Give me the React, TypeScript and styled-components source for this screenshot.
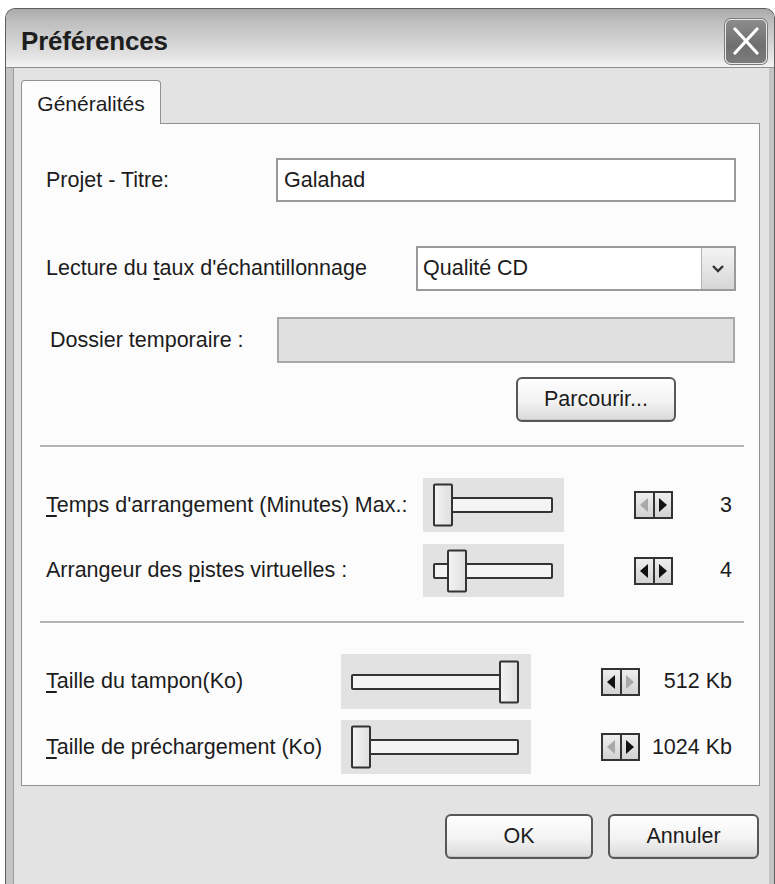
import styled, { createGlobalStyle } from "styled-components";

const GlobalStyle = createGlobalStyle`
  html, body {
    margin: 0;
    padding: 0;
    background: #ffffff;
    height: 884px;
    overflow: hidden;
  }
  body {
    font-family: "Liberation Sans", Arial, sans-serif;
    color: #1c1c1c;
  }
`;

const Page = styled.div`
  padding: 8px 0 0 5px;
`;

const Window = styled.div`
  width: 770px;
  box-sizing: border-box;
  border: 1px solid #5e5e5e;
  border-bottom: none;
  border-radius: 10px 10px 0 0;
  background: #c4c4c4;
  overflow: hidden;
`;

const TitleBar = styled.div`
  height: 59px;
  box-sizing: border-box;
  padding: 6px 7px 0 15px;
  display: flex;
  align-items: center;
  justify-content: space-between;
  background: linear-gradient(#a9a9a9 0%, #bdbdbd 20%, #d2d2d2 55%, #e6e6e6 85%, #f3f3f3 100%);
  border-bottom: 1px solid #8e8e8e;
`;

const Title = styled.h1`
  margin: 0;
  font-size: 26px;
  font-weight: 700;
  color: #1e1e1e;
  letter-spacing: -0.2px;
`;

const CloseButton = styled.button`
  width: 42px;
  height: 45px;
  padding: 0;
  border: 1px solid #e8e8e8;
  border-radius: 6px;
  background: linear-gradient(#8c8c8c, #6f6f6f 60%, #7c7c7c);
  box-shadow: 0 0 0 1px #7a7a7a;
  display: flex;
  align-items: center;
  justify-content: center;
`;

const Frame = styled.div`
  padding: 0 5px 0 7px;
`;

const Body = styled.div`
  background: #e3e3e3;
  border-left: 1px solid #9c9c9c;
  padding: 12px 9px 40px 7px;
`;

const TabStrip = styled.div`
  display: flex;
`;

const Tab = styled.div`
  position: relative;
  z-index: 1;
  width: 140px;
  height: 44px;
  box-sizing: border-box;
  margin-bottom: -1px;
  border: 1px solid #919191;
  border-bottom: none;
  border-radius: 4px 4px 0 0;
  background: #fcfcfc;
  display: flex;
  align-items: center;
  justify-content: center;
  font-size: 21px;
  padding-top: 2px;
`;

const Panel = styled.div`
  border: 1px solid #919191;
  background: #fcfcfc;
  padding: 34px 23px 11px 24px;
`;

const FieldRow = styled.div<{ $h: number; $mt?: number }>`
  display: flex;
  align-items: center;
  justify-content: space-between;
  height: ${({ $h }) => $h}px;
  margin-top: ${({ $mt }) => $mt ?? 0}px;
`;

const Label = styled.span<{ $indent?: number }>`
  font-size: 21.5px;
  padding-left: ${({ $indent }) => $indent ?? 0}px;
  white-space: nowrap;
  color: #1c1c1c;
`;

const TextBox = styled.div<{ $w: number; $disabled?: boolean }>`
  width: ${({ $w }) => $w}px;
  height: 100%;
  box-sizing: border-box;
  border: 2px solid ${({ $disabled }) => ($disabled ? "#a9a9a9" : "#9a9a9a")};
  background: ${({ $disabled }) => ($disabled ? "#e0e0e0" : "#ffffff")};
  padding-left: 6px;
  display: flex;
  align-items: center;
  font-size: 21.5px;
  margin-right: ${({ $disabled }) => ($disabled ? 1 : 0)}px;
`;

const Select = styled.div`
  width: 320px;
  height: 100%;
  box-sizing: border-box;
  border: 2px solid #9a9a9a;
  background: #ffffff;
  display: flex;
  align-items: center;
  justify-content: space-between;
  padding-left: 5px;
  font-size: 21.5px;
`;

const DropButton = styled.div`
  width: 33px;
  height: 100%;
  box-sizing: border-box;
  border-left: 1px solid #b4b4b4;
  background: linear-gradient(#f4f4f4, #d6d6d6);
  display: flex;
  align-items: center;
  justify-content: center;
`;

const ButtonRow = styled.div<{ $mt: number; $mr: number }>`
  display: flex;
  justify-content: flex-end;
  gap: 15px;
  margin-top: ${({ $mt }) => $mt}px;
  margin-right: ${({ $mr }) => $mr}px;
`;

const PushButton = styled.button<{ $w: number }>`
  width: ${({ $w }) => $w}px;
  height: 45px;
  border: 2px solid #575757;
  border-radius: 6px;
  background: linear-gradient(#ffffff, #f3f3f3 55%, #d9d9d9);
  box-shadow: inset 0 -1px 0 #c4c4c4;
  font-family: "Liberation Sans", Arial, sans-serif;
  font-size: 21.5px;
  color: #1c1c1c;
  padding: 0;
`;

const Separator = styled.hr<{ $mt: number }>`
  margin: ${({ $mt }) => $mt}px -8px 0 -6px;
  height: 2px;
  border: none;
  background: #b3b3b3;
  border-bottom: 1px solid #ffffff;
`;

const SliderGroup = styled.div`
  margin-top: 30px;
  display: flex;
  flex-direction: column;
`;

const SliderRow = styled.div<{ $h: number; $labelW: number; $mt?: number }>`
  display: grid;
  grid-template-columns: ${({ $labelW }) => $labelW}px auto 1fr;
  align-items: center;
  height: ${({ $h }) => $h}px;
  margin-top: ${({ $mt }) => $mt ?? 0}px;
`;

const Well = styled.div<{ $w: number; $pr: number }>`
  width: ${({ $w }) => $w}px;
  height: 100%;
  box-sizing: border-box;
  background: #e2e2e2;
  padding: 0 ${({ $pr }) => $pr}px 0 10px;
  display: flex;
  align-items: center;
`;

const Track = styled.div`
  position: relative;
  flex: 1;
  height: 16px;
  box-sizing: border-box;
  border: 2px solid #333333;
  border-radius: 2px;
  background: #f4f4f4;
`;

const Thumb = styled.div`
  position: absolute;
  top: 50%;
  width: 20px;
  height: 43px;
  box-sizing: border-box;
  transform: translateY(-50%);
  border: 2px solid #333333;
  border-radius: 2px;
  background: linear-gradient(90deg, #f2f2f2, #e0e0e0);
`;

const ValueCell = styled.div`
  display: flex;
  align-items: center;
  padding-left: 70px;
  padding-right: 4px;
`;

const Spinner = styled.div`
  width: 39px;
  height: 28px;
  box-sizing: border-box;
  border: 2px solid #333333;
  display: flex;
`;

const SpinHalf = styled.div<{ $right?: boolean }>`
  flex: 1;
  display: flex;
  align-items: center;
  justify-content: center;
  background: linear-gradient(#eeeeee, #d2d2d2);
  border-left: ${({ $right }) => ($right ? "2px solid #333333" : "none")};
`;

const Value = styled.span`
  flex: 1;
  text-align: right;
  font-size: 21.5px;
  white-space: nowrap;
`;

const Mnemonic = styled.u`
  text-underline-offset: 3px;
`;

function Arrow({ dir, active }: { dir: "left" | "right"; active: boolean }) {
  const points = dir === "left" ? "8,0 8,14 0,7" : "0,0 0,14 8,7";
  return (
    <svg width="8" height="14" viewBox="0 0 8 14">
      <polygon points={points} fill={active ? "#111111" : "#a8a8a8"} />
    </svg>
  );
}

interface SliderProps {
  wellW: number;
  pr: number;
  value: number;
}

function Slider({ wellW, pr, value }: SliderProps) {
  const trackW = wellW - 10 - pr;
  const left = Math.round(value * (trackW - 20)) - 2;
  return (
    <Well $w={wellW} $pr={pr}>
      <Track>
        <Thumb style={{ left }} />
      </Track>
    </Well>
  );
}

interface ValueProps {
  canDown: boolean;
  canUp: boolean;
  text: string;
}

function SpinValue({ canDown, canUp, text }: ValueProps) {
  return (
    <ValueCell>
      <Spinner>
        <SpinHalf>
          <Arrow dir="left" active={canDown} />
        </SpinHalf>
        <SpinHalf $right>
          <Arrow dir="right" active={canUp} />
        </SpinHalf>
      </Spinner>
      <Value>{text}</Value>
    </ValueCell>
  );
}

export default function App() {
  return (
    <Page>
      <GlobalStyle />
      <Window>
        <TitleBar>
          <Title>Préférences</Title>
          <CloseButton>
            <svg width="26" height="28" viewBox="0 0 26 28">
              <path d="M2 2 L24 26 M24 2 L2 26" stroke="#ffffff" strokeWidth="3.2" strokeLinecap="round" />
            </svg>
          </CloseButton>
        </TitleBar>
        <Frame>
          <Body>
            <TabStrip>
              <Tab>Généralités</Tab>
            </TabStrip>
            <Panel>
              <FieldRow $h={44}>
                <Label>Projet - Titre:</Label>
                <TextBox $w={460}>Galahad</TextBox>
              </FieldRow>
              <FieldRow $h={45} $mt={44}>
                <Label>
                  Lecture du <Mnemonic>t</Mnemonic>aux d'échantillonnage
                </Label>
                <Select>
                  Qualité CD
                  <DropButton>
                    <svg width="12" height="8" viewBox="0 0 12 8">
                      <path d="M1 1 L6 6 L11 1" stroke="#333333" strokeWidth="2.4" fill="none" />
                    </svg>
                  </DropButton>
                </Select>
              </FieldRow>
              <FieldRow $h={46} $mt={26}>
                <Label $indent={4}>Dossier temporaire :</Label>
                <TextBox $w={458} $disabled />
              </FieldRow>
              <ButtonRow $mt={14} $mr={60}>
                <PushButton $w={160}>Parcourir...</PushButton>
              </ButtonRow>
              <Separator $mt={23} />
              <SliderGroup>
                <SliderRow $h={54} $labelW={377}>
                  <Label>
                    <Mnemonic>T</Mnemonic>emps d'arrangement (Minutes) Max.:
                  </Label>
                  <Slider wellW={141} pr={11} value={0} />
                  <SpinValue canDown={false} canUp text="3" />
                </SliderRow>
                <SliderRow $h={53} $labelW={377} $mt={12}>
                  <Label>
                    Arrangeur des <Mnemonic>p</Mnemonic>istes virtuelles :
                  </Label>
                  <Slider wellW={141} pr={11} value={0.14} />
                  <SpinValue canDown canUp text="4" />
                </SliderRow>
              </SliderGroup>
              <Separator $mt={24} />
              <SliderGroup>
                <SliderRow $h={55} $labelW={295}>
                  <Label>
                    <Mnemonic>T</Mnemonic>aille du tampon(Ko)
                  </Label>
                  <Slider wellW={190} pr={12} value={1} />
                  <SpinValue canDown canUp={false} text="512 Kb" />
                </SliderRow>
                <SliderRow $h={54} $labelW={295} $mt={11}>
                  <Label>
                    <Mnemonic>T</Mnemonic>aille de préchargement (Ko)
                  </Label>
                  <Slider wellW={190} pr={12} value={0} />
                  <SpinValue canDown={false} canUp text="1024 Kb" />
                </SliderRow>
              </SliderGroup>
            </Panel>
            <ButtonRow $mt={28} $mr={1}>
              <PushButton $w={148}>OK</PushButton>
              <PushButton $w={151}>Annuler</PushButton>
            </ButtonRow>
          </Body>
        </Frame>
      </Window>
    </Page>
  );
}
